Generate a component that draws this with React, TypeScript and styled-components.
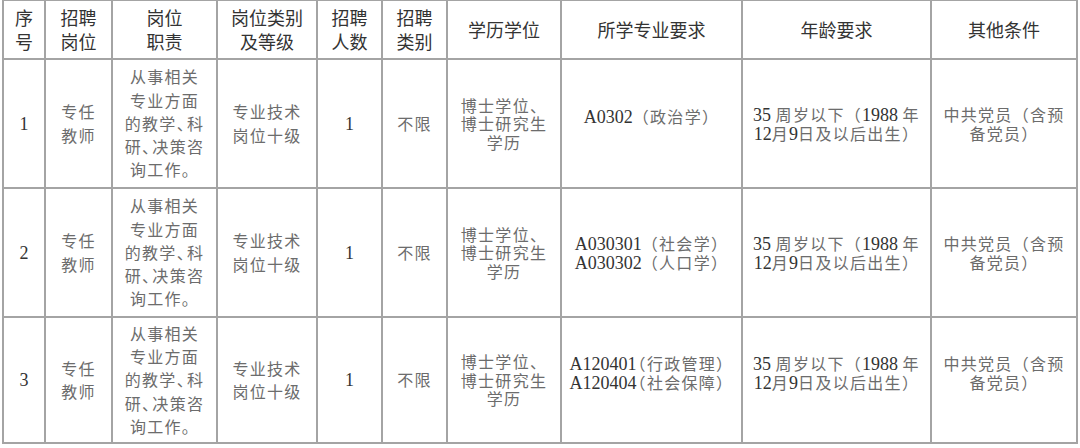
import React from "react";
import styled, { createGlobalStyle } from "styled-components";

const LINE = "#a4a4a4";

const GlobalStyle = createGlobalStyle`
  html,
  body {
    margin: 0;
    padding: 0;
    background: #fff;
  }
  body {
    font-family: "Liberation Serif", "Noto Sans CJK SC", serif;
  }
`;

type Row = {
  no: string;
  majors: React.ReactNode[];
  majorLift: number;
  restLift: number;
};

const headers: string[][] = [
  ["序", "号"],
  ["招聘", "岗位"],
  ["岗位", "职责"],
  ["岗位类别", "及等级"],
  ["招聘", "人数"],
  ["招聘", "类别"],
  ["学历学位"],
  ["所学专业要求"],
  ["年龄要求"],
  ["其他条件"],
];

const rows: Row[] = [
  { no: "1", majors: ["A0302（政治学）"], majorLift: 14, restLift: 0 },
  {
    no: "2",
    majors: ["A030301（社会学）", "A030302（人口学）"],
    majorLift: 0,
    restLift: 0,
  },
  {
    no: "3",
    majors: ["A120401~（行政管理）", "A120404~（社会保障）"],
    majorLift: 15,
    restLift: 15,
  },
];

// latin runs go to the serif face, 、 inside a line is set narrow,
// ~ marks a paren that sits tight against the code before it
function rich(text: React.ReactNode) {
  if (typeof text !== "string") return text;
  const out: React.ReactNode[] = [];
  const re = /([A-Za-z0-9 ]+)|(~（)|(、)|([^A-Za-z0-9 、~]+)/g;
  let m: RegExpExecArray | null;
  let k = 0;
  while ((m = re.exec(text))) {
    if (m[1]) out.push(<Latin key={k++}>{m[1]}</Latin>);
    else if (m[2]) out.push(<TightParen key={k++}>（</TightParen>);
    else if (m[3])
      out.push(
        re.lastIndex < text.length ? (
          <Dun key={k++}>、</Dun>
        ) : (
          <React.Fragment key={k++}>、</React.Fragment>
        )
      );
    else out.push(<React.Fragment key={k++}>{m[4]}</React.Fragment>);
  }
  return out;
}

function Lines({ items }: { items: React.ReactNode[] }) {
  return (
    <>
      {items.map((t, i) => (
        <Line key={i}>{rich(t)}</Line>
      ))}
    </>
  );
}

function App() {
  return (
    <>
      <GlobalStyle />
      <Sheet>
        {headers.map((h, i) => (
          <HeadCell key={"h" + i}>
            <Lines items={h} />
          </HeadCell>
        ))}

        {rows.map((r) => (
          <React.Fragment key={r.no}>
            <BodyCell>
              <Lines items={[r.no]} />
            </BodyCell>
            <BodyCell>
              <Lines items={["专任", "教师"]} />
            </BodyCell>
            <BodyCell>
              <Lines
                items={["从事相关", "专业方面", "的教学、科", "研、决策咨", "询工作。"]}
              />
            </BodyCell>
            <BodyCell>
              <Lines items={["专业技术", "岗位十级"]} />
            </BodyCell>
            <BodyCell>
              <Lines items={["1"]} />
            </BodyCell>
            <BodyCell>
              <Lines items={["不限"]} />
            </BodyCell>
            <BodyCell $lh={18.5}>
              <Lines items={["博士学位、", "博士研究生", "学历"]} />
            </BodyCell>
            <BodyCell $lh={19} $lift={r.majorLift}>
              <Lines items={r.majors} />
            </BodyCell>
            <BodyCell $lh={19} $lift={r.restLift}>
              <Lines items={["35 周岁以下（1988 年", "12月9日及以后出生）"]} />
            </BodyCell>
            <BodyCell $lh={19} $lift={r.restLift}>
              <Lines items={["中共党员（含预", "备党员）"]} />
            </BodyCell>
          </React.Fragment>
        ))}
      </Sheet>
    </>
  );
}

const Sheet = styled.div`
  display: grid;
  grid-template-columns: 42px 67px 105px 100px 65px 65px 114px 181px 189px 146px;
  grid-template-rows: 59px 129px 129px 126px;
  width: max-content;
  margin: -1px 0 0 2px;
  border-left: 2px solid ${LINE};
  border-top: 2px solid ${LINE};
`;

const Cell = styled.div<{ $lh?: number; $lift?: number }>`
  box-sizing: border-box;
  display: flex;
  flex-direction: column;
  align-items: center;
  justify-content: center;
  text-align: center;
  white-space: nowrap;
  border-right: 2px solid ${LINE};
  border-bottom: 2px solid ${LINE};
  padding-bottom: ${(p) => p.$lift ?? 0}px;
  line-height: ${(p) => p.$lh ?? 23.3}px;
`;

const HeadCell = styled(Cell)`
  font-family: "Noto Sans CJK SC", sans-serif;
  font-size: 18px;
  color: #333;
`;

const BodyCell = styled(Cell)`
  font-family: "Noto Sans CJK SC", sans-serif;
  font-size: 16px;
  letter-spacing: 1.3px;
  color: #6c6c6c;
`;

const Line = styled.span`
  display: block;
`;

const Latin = styled.span`
  font-family: "Liberation Serif", serif;
  font-size: 18px;
  line-height: 1;
  letter-spacing: 0;
  color: #333;
`;

const Dun = styled.span`
  margin-right: -7px;
`;

const TightParen = styled.span`
  margin-left: -7px;
`;

export default App;
